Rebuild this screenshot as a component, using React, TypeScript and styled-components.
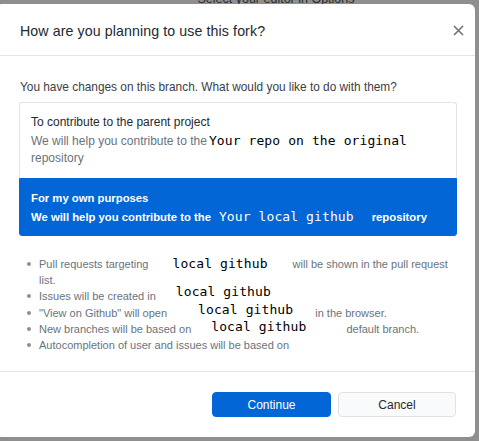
import React from "react";
import styled, { createGlobalStyle } from "styled-components";

const Global = createGlobalStyle`
  html, body { margin: 0; padding: 0; }
  body {
    background: #8f8f8f;
    font-family: "Liberation Sans", Arial, sans-serif;
    overflow: hidden;
  }
`;

const Page = styled.div`
  width: 479px;
  height: 441px;
  display: flex;
  flex-direction: column;
  overflow: hidden;
`;

const Backdrop = styled.div`
  height: 4px;
  overflow: hidden;
  display: flex;
  justify-content: center;
  padding-left: 73px;
`;

const BackdropText = styled.span`
  font-size: 12.5px;
  line-height: 12px;
  color: #2b2b2b;
  margin-top: -7px;
  white-space: nowrap;
`;

const Dialog = styled.div`
  width: 479px;
  margin-left: -4px;
  height: 433px;
  background: #ffffff;
  border-radius: 6px;
  display: flex;
  flex-direction: column;
  padding-left: 4px;
  box-sizing: border-box;
`;

const Header = styled.div`
  height: 49px;
  border-bottom: 1px solid #e1e4e8;
  display: flex;
  align-items: center;
  justify-content: space-between;
  padding: 2px 10px 0 20px;
  box-sizing: content-box;
`;

const Title = styled.h1`
  margin: 0;
  font-size: 14.2px;
  font-weight: 400;
  color: #24292e;
  letter-spacing: 0.1px;
`;

const Close = styled.button`
  border: 0;
  background: none;
  padding: 0;
  width: 14px;
  height: 14px;
  display: flex;
  align-items: center;
  justify-content: center;
  color: #6a737d;
`;

const Body = styled.div`
  padding: 23px 18px 0 19px;
  display: flex;
  flex-direction: column;
  flex: 1;
`;

const Lead = styled.p`
  margin: 0 0 7px 1px;
  font-size: 11.85px;
  line-height: 16px;
  color: #3b4047;
`;

const Options = styled.div`
  display: flex;
  flex-direction: column;
`;

const Option = styled.div<{ $selected?: boolean; $h: number }>`
  height: ${(p) => p.$h}px;
  box-sizing: border-box;
  padding: 11px 11px 0 11px;
  background: ${(p) => (p.$selected ? "#0366d6" : "#ffffff")};
  border: 1px solid ${(p) => (p.$selected ? "#0366d6" : "#e1e4e8")};
  border-bottom: ${(p) => (p.$selected ? "1px solid #0366d6" : "0")};
  border-radius: ${(p) => (p.$selected ? "0 0 3px 3px" : "3px 3px 0 0")};
  color: ${(p) => (p.$selected ? "#ffffff" : "#24292e")};
`;

const OptionTitle = styled.div<{ $selected?: boolean }>`
  font-size: ${(p) => (p.$selected ? "11.3px" : "12px")};
  line-height: 17px;
  font-weight: ${(p) => (p.$selected ? 700 : 500)};
  color: ${(p) => (p.$selected ? "#ffffff" : "#24292e")};
`;

const OptionDesc = styled.div<{ $selected?: boolean }>`
  margin-top: 2px;
  font-size: ${(p) => (p.$selected ? "11.3px" : "12px")};
  line-height: 17px;
  font-weight: ${(p) => (p.$selected ? 700 : 400)};
  color: ${(p) => (p.$selected ? "#ffffff" : "#6a737d")};
`;

const Code = styled.span<{ $l?: number; $r?: number; $light?: boolean; $up?: number }>`
  position: relative;
  top: ${(p) => -(p.$up ?? 0)}px;
  font-family: "DejaVu Sans Mono", "Liberation Mono", monospace;
  font-size: 13px;
  line-height: 1;
  font-weight: 400;
  color: ${(p) => (p.$light ? "#ffffff" : "#000000")};
  margin-left: ${(p) => p.$l ?? 0}px;
  margin-right: ${(p) => p.$r ?? 0}px;
  letter-spacing: 0.1px;
`;

const List = styled.ul`
  margin: 20px 0 0 0;
  padding: 0 0 0 20px;
  list-style: none;
`;

const Item = styled.li`
  position: relative;
  font-size: 11px;
  line-height: 16.2px;
  color: #6a737d;
  &::before {
    content: "";
    position: absolute;
    left: -12px;
    top: 6px;
    width: 4px;
    height: 4px;
    border-radius: 50%;
    background: #8a9097;
  }
`;

const Footer = styled.div`
  border-top: 1px solid #e1e4e8;
  height: 65px;
  display: flex;
  justify-content: flex-end;
  align-items: center;
  gap: 7px;
  padding: 0 19px 0 0;
`;

const Button = styled.button<{ $primary?: boolean }>`
  width: ${(p) => (p.$primary ? 119 : 118)}px;
  height: 25px;
  border-radius: 4px;
  font-family: "Liberation Sans", Arial, sans-serif;
  font-size: 12px;
  border: 1px solid ${(p) => (p.$primary ? "#0366d6" : "#dfe3e8")};
  background: ${(p) => (p.$primary ? "#0366d6" : "#f9fafb")};
  color: ${(p) => (p.$primary ? "#ffffff" : "#24292e")};
  padding: 0;
`;

export default function App() {
  return (
    <Page>
      <Global />
      <Backdrop>
        <BackdropText>Select your editor in Options</BackdropText>
      </Backdrop>
      <Dialog>
        <Header>
          <Title>How are you planning to use this fork?</Title>
          <Close aria-label="Close">
            <svg width="11" height="11" viewBox="0 0 11 11">
              <path d="M1 1L10 10M10 1L1 10" stroke="#6a737d" strokeWidth="1.6" />
            </svg>
          </Close>
        </Header>
        <Body>
          <Lead>You have changes on this branch. What would you like to do with them?</Lead>
          <Options>
            <Option $h={76}>
              <OptionTitle>To contribute to the parent project</OptionTitle>
              <OptionDesc>
                We will help you contribute to the<Code $l={2}>Your repo on the original</Code>
                <br />
                repository
              </OptionDesc>
            </Option>
            <Option $selected $h={58}>
              <OptionTitle $selected>For my own purposes</OptionTitle>
              <OptionDesc $selected>
                We will help you contribute to the
                <Code $light $l={8} $r={18}>Your local github</Code>
                repository
              </OptionDesc>
            </Option>
          </Options>
          <List>
            <Item>
              Pull requests targeting<Code $l={24} $r={25}>local github</Code>will be shown in the pull request list.
            </Item>
            <Item>
              Issues will be created in<Code $l={20} $up={4}>local github</Code>
            </Item>
            <Item>
              "View on Github" will open<Code $l={31} $r={22} $up={3}>local github</Code>in the browser.
            </Item>
            <Item>
              New branches will be based on<Code $l={20} $r={40} $up={2}>local github</Code>default branch.
            </Item>
            <Item>Autocompletion of user and issues will be based on</Item>
          </List>
        </Body>
        <Footer>
          <Button $primary>Continue</Button>
          <Button>Cancel</Button>
        </Footer>
      </Dialog>
    </Page>
  );
}
